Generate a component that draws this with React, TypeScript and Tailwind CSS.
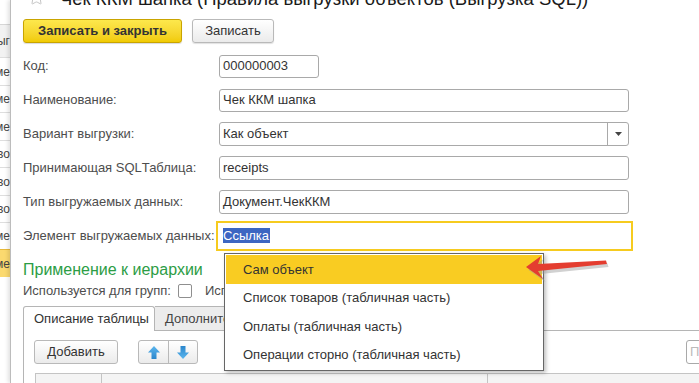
import { Star } from "lucide-react";

const stripRows = [
  { t: "ыг", h: 33, head: true },
  { t: "име", h: 28 },
  { t: "име", h: 27 },
  { t: "име", h: 28 },
  { t: "во", h: 27 },
  { t: "во", h: 28 },
  { t: "во", h: 27 },
  { t: "име", h: 27 },
  { t: "име", h: 28, active: true },
];

const menuItems = [
  "Сам объект",
  "Список товаров (табличная часть)",
  "Оплаты (табличная часть)",
  "Операции сторно (табличная часть)",
];

function Field({ label, value, width = "w-[410px]", mt, h = "h-[24px]", select = false }: { label: string; value: string; width?: string; mt: string; h?: string; select?: boolean }) {
  return (
    <div className={`flex items-center ${mt}`}>
      <div className="w-[196px] text-[13px] text-[#4d4d4d]">{label}</div>
      <div className={`${width} ${h} flex items-center border border-[#a9a9a9] rounded-[3px] bg-white`}>
        <span className="flex-1 pl-[3px] text-[13px] text-[#333]">{value}</span>
        {select && (
          <div className="w-[21px] h-full border-l border-[#a9a9a9] flex items-center justify-center">
            <svg width="7" height="4" viewBox="0 0 7 4"><path d="M0 0h7L3.5 4z" fill="#444" /></svg>
          </div>
        )}
      </div>
    </div>
  );
}

function ArrowIcon({ down = false }: { down?: boolean }) {
  return (
    <svg width="12" height="13" viewBox="0 0 12 13" className={down ? "rotate-180" : ""}>
      <defs>
        <linearGradient id={down ? "ad" : "au"} x1="0" y1="0" x2="0" y2="1">
          <stop offset="0" stopColor="#5cb6ee" />
          <stop offset="1" stopColor="#2a86cc" />
        </linearGradient>
      </defs>
      <path d="M6 0L12 6.5H8.5V13H3.5V6.5H0z" fill={`url(#${down ? "ad" : "au"})`} />
    </svg>
  );
}

export default function App() {
  return (
    <div className="w-[699px] h-[383px] overflow-hidden relative bg-white flex font-['Liberation_Sans',Arial,sans-serif]">
      {/* list behind the dialog */}
      <div className="w-[10px] shrink-0 flex flex-col pt-[24px]">
        {stripRows.map((r, i) => (
          <div
            key={i}
            style={{ height: r.h }}
            className={`flex items-center justify-end overflow-hidden whitespace-nowrap text-[12px] text-[#444] border-t ${r.active ? "bg-[#fbd96f] border-[#e8b93a]" : r.head ? "bg-[#f2f2f2] border-[#d6d6d6]" : "border-[#dedede]"}`}
          >
            <span>{r.t}</span>
          </div>
        ))}
      </div>

      {/* dialog */}
      <div className="flex-1 border-l border-[#bcbcbc] shadow-[-2px_0_4px_rgba(0,0,0,0.12)] bg-white flex flex-col">
        <div className="h-[20px] overflow-hidden flex items-start">
          <Star size={17} strokeWidth={1.4} className="text-[#c4c4c4] ml-[17px] mt-[-11px]" />
          <div className="ml-[15px] mt-[-10px] text-[18.5px] leading-[18px] text-[#1a1a1a] whitespace-nowrap">
            Чек ККМ шапка (Правила выгрузки объектов (Выгрузка SQL))
          </div>
        </div>

        <div className="pl-[12px] flex gap-[10px] h-[25px]">
          <button className="w-[159px] h-full rounded-[3px] border border-[#c9a400] bg-gradient-to-b from-[#fde84c] to-[#f1cb00] text-[13px] font-bold text-[#333] shadow-[0_1px_1px_rgba(0,0,0,0.15)]">
            Записать и закрыть
          </button>
          <button className="w-[82px] h-full rounded-[3px] border border-[#b9b9b9] bg-gradient-to-b from-white to-[#ebebeb] text-[13px] text-[#333] shadow-[0_1px_1px_rgba(0,0,0,0.12)]">
            Записать
          </button>
        </div>

        <div className="pl-[12px] flex flex-col">
          <Field label="Код:" value="000000003" width="w-[100px]" h="h-[23px]" mt="mt-[12px]" />
          <Field label="Наименование:" value="Чек ККМ шапка" mt="mt-[11px]" h="h-[23px]" />
          <Field label="Вариант выгрузки:" value="Как объект" mt="mt-[10px]" select />
          <Field label="Принимающая SQLТаблица:" value="receipts" mt="mt-[10px]" />
          <Field label="Тип выгружаемых данных:" value="Документ.ЧекККМ" mt="mt-[10px]" />

          <div className="flex items-center mt-[7px]">
            <div className="w-[193px] text-[13px] text-[#4d4d4d]">Элемент выгружаемых данных:</div>
            <div className="w-[417px] h-[30px] border-[2px] border-[#f6cb1f] flex items-center pl-[5px]">
              <span className="bg-[#3c66c2] text-white text-[13px] leading-[15px] pr-[1px]">Ссылка</span>
            </div>
          </div>

          <div className="mt-[10px] text-[16px] text-[#2c9d45] leading-[18px]">Применение к иерархии</div>
          <div className="mt-[4px] flex items-center text-[13px] text-[#4d4d4d] h-[16px]">
            <span>Используется для групп:</span>
            <span className="ml-[7px] w-[14px] h-[14px] border border-[#8f8f8f] rounded-[2px] bg-white" />
            <span className="ml-[13px]">Используется</span>
          </div>
        </div>

        {/* tabs */}
        <div className="mt-[7px] pl-[12px] flex h-[27px]">
          <div className="w-[132px] h-full border border-b-0 border-[#b5b5b5] rounded-t-[3px] bg-white flex items-center pl-[10px] text-[13px] text-[#333]">
            Описание таблицы
          </div>
          <div className="w-[110px] h-full border-t border-r border-b border-[#b5b5b5] rounded-tr-[3px] bg-[#ececec] flex items-center pl-[10px] text-[13px] text-[#444] whitespace-nowrap">
            Дополнительно
          </div>
          <div className="flex-1 border-b border-[#b5b5b5]" />
        </div>
        <div className="ml-[12px] flex-1 border-l border-[#b5b5b5] pl-[10px] pt-[9px] flex flex-col">
          <div className="flex h-[24px] items-center">
            <button className="w-[84px] h-full rounded-[3px] border border-[#b9b9b9] bg-gradient-to-b from-white to-[#ebebeb] text-[13px] text-[#333]">
              Добавить
            </button>
            <div className="ml-[20px] w-[60px] h-full rounded-[3px] border border-[#b9b9b9] bg-gradient-to-b from-white to-[#ebebeb] flex">
              <div className="w-[30px] h-full flex items-center justify-center border-r border-[#b9b9b9]"><ArrowIcon /></div>
              <div className="flex-1 h-full flex items-center justify-center"><ArrowIcon down /></div>
            </div>
            <div className="ml-auto w-[30px] mr-[-17px] h-[24px] border border-[#a9a9a9] rounded-[3px] text-[13px] text-[#bbb] pl-[3px] flex items-center overflow-hidden">
              Поиск
            </div>
          </div>
          <div className="mt-[9px] ml-[1px] flex h-[10px] border-t border-l border-[#c4c4c4] bg-[#f4f4f4]">
            <div className="w-[66px] border-r border-[#c4c4c4]" />
            <div className="w-[386px] border-r border-[#c4c4c4]" />
          </div>
        </div>
      </div>

      {/* dropdown list */}
      <div className="absolute left-[224px] top-[253px] w-[320px] h-[118px] bg-white border border-[#666] shadow-[2px_2px_4px_rgba(0,0,0,0.25)] flex flex-col p-px">
        {menuItems.map((m, i) => (
          <div key={m} className={`h-[29px] flex items-center pl-[17px] text-[13px] text-[#333] ${i === 0 ? "bg-[#f9cc22]" : ""}`}>
            {m}
          </div>
        ))}
      </div>

      {/* red pointer arrow */}
      <svg className="absolute left-[520px] top-[250px]" width="95" height="35" viewBox="520 250 95 35">
        <path d="M527 268L542 257L539 265L606 261.5L607 265L539 272L544 280z" fill="#9a9a9a" opacity="0.45" transform="translate(1.5 2)" />
        <path d="M526 267L541 256L538 264L606 260.5L607 264L538 271L543 279z" fill="#e43d30" />
      </svg>
    </div>
  );
}
